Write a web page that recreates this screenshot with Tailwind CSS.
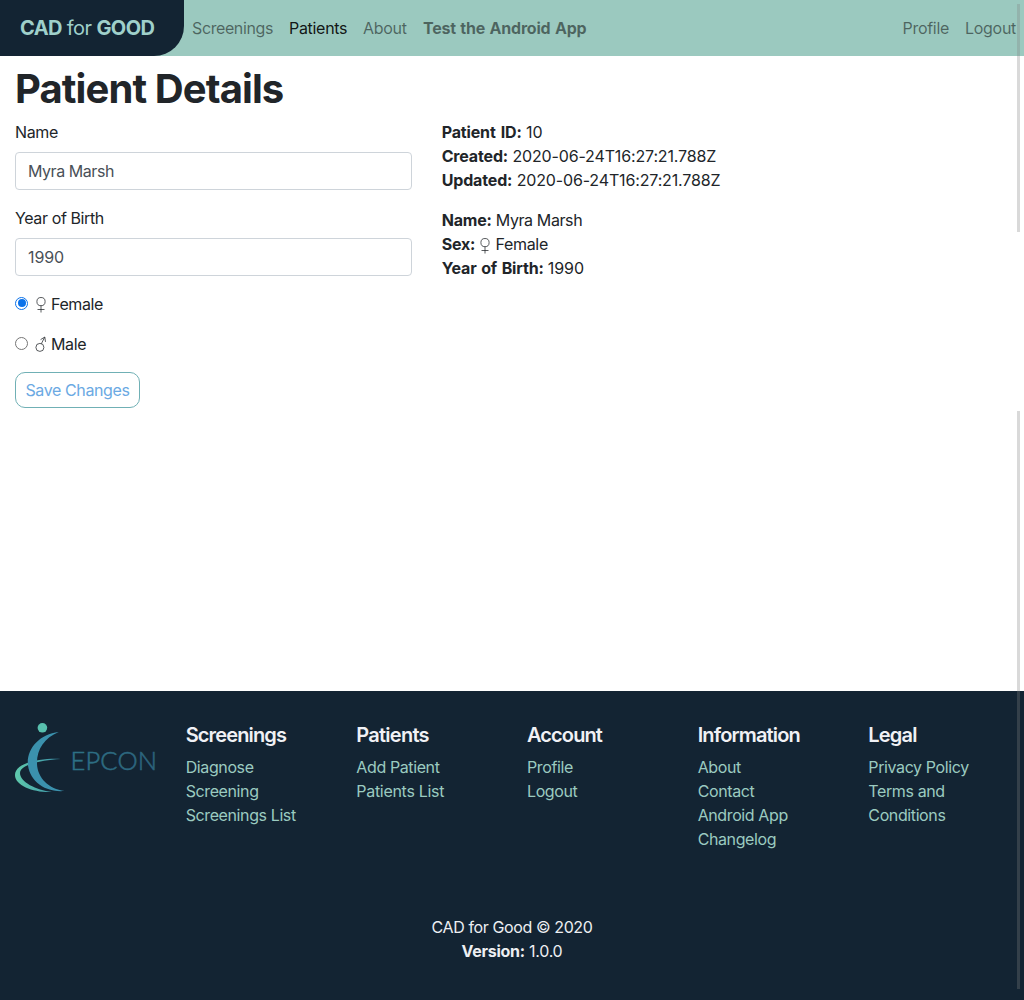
<!DOCTYPE html>
<html lang="en">
<head>
<meta charset="utf-8">
<title>CAD for GOOD</title>
<script src="https://cdn.jsdelivr.net/npm/@tailwindcss/browser@4"></script>
</head>
<body class="relative flex h-[1000px] flex-col overflow-hidden bg-white font-[Inter,sans-serif] text-base leading-6 tracking-[-0.39px] text-[#212529]">
<svg class="hidden">
  <symbol id="female" viewBox="0 0 12 18"><g fill="none" stroke="currentColor" stroke-width=".75"><circle cx="6" cy="5.6" r="4.1"/><path d="M6 9.7v6.8M2.5 13.5h7"/></g></symbol>
  <symbol id="male" viewBox="0 0 12 18"><g fill="none" stroke="currentColor" stroke-width=".75"><circle cx="4.9" cy="12.4" r="4"/><path d="M6.4 8.7 9.6 2.3M5.6 4.6 9.8 2l.7 4.9"/></g></symbol>
</svg>
<nav class="flex h-14 shrink-0 items-center bg-[#9bc9bf] text-black/50">
  <a class="flex h-14 w-[184px] items-center whitespace-pre rounded-br-[30px] bg-[#132433] pl-5 text-xl tracking-[-0.6px] text-[#9fd0ca]"><b>CAD</b> for <b>GOOD</b></a>
  <a class="w-[97px] pl-2">Screenings</a>
  <a class="w-[74px] pl-2 tracking-[-0.3px] text-black/90">Patients</a>
  <a class="w-[60px] pl-2 tracking-[-0.3px]">About</a>
  <a class="pl-2 font-bold tracking-[-0.2px] [word-spacing:0.8px]">Test the Android App</a>
  <a class="ml-auto pr-4 tracking-[-0.3px]">Profile</a>
  <a class="pr-2 tracking-[-0.3px]">Logout</a>
</nav>
<main class="flex-1 pt-2">
  <h1 class="mb-2 px-[15px] pt-px text-[40px] font-bold leading-[47px] tracking-[-0.9px]">Patient Details</h1>
  <div class="flex">
    <form class="w-5/12 px-[15px]">
      <label class="mb-2 block">Name</label>
      <input class="mb-4 block h-[38px] w-full rounded border border-[#ced4da] px-3 tracking-[-0.45px] text-[#495057]" value="Myra Marsh">
      <label class="mb-2 block">Year of Birth</label>
      <input class="mb-4 block h-[38px] w-full rounded border border-[#ced4da] px-3 tracking-[-0.1px] text-[#495057]" value="1990">
      <label class="mb-4 flex h-6 items-center"><span class="mr-[7px] mb-[2px] flex size-[13px] items-center justify-center rounded-full border border-[#0b72ea]"><span class="size-2 rounded-full bg-[#0b72ea]"></span></span><svg class="mr-1 mt-0.5 h-[18px] w-3"><use href="#female"/></svg>Female</label>
      <label class="mb-4 flex h-6 items-center"><span class="mr-[7px] mb-[2px] size-[13px] rounded-full border border-[#767676]"></span><svg class="mr-1 h-[18px] w-3"><use href="#male"/></svg>Male</label>
      <button type="button" class="h-9 w-[125px] rounded-[10px] border border-[#70b0b5] text-[#6ba9e3]">Save Changes</button>
    </form>
    <section class="px-[15px]">
      <p class="mb-4 tracking-[-0.15px]"><b class="[word-spacing:1.5px]">Patient ID:</b> 10<br><b>Created:</b> 2020-06-24T16:27:21.788Z<br><b>Updated:</b> 2020-06-24T16:27:21.788Z</p>
      <p><b class="tracking-[-0.2px]">Name:</b> Myra Marsh<br><b class="tracking-[-0.2px]">Sex:</b> <svg class="inline h-[18px] w-3 align-[-5px]"><use href="#female"/></svg> <span class="tracking-[-0.3px]">Female</span><br><b class="tracking-[-0.15px] [word-spacing:1px]">Year of Birth:</b> <span class="tracking-[-0.1px]">1990</span></p>
    </section>
  </div>
</main>
<footer class="h-[309px] shrink-0 bg-[#132433] pt-8 text-[#9bcbc0]">
  <div class="grid h-[192px] grid-cols-6">
    <div class="pl-[15px]">
      <svg class="h-[72px] w-[142px]" viewBox="15 723 142 72">
        <defs>
          <linearGradient id="ring"><stop stop-color="#5fc9ac"/><stop offset="1" stop-color="#398fa9"/></linearGradient>
          <linearGradient id="word"><stop stop-color="#2d7185"/><stop offset="1" stop-color="#2c637d"/></linearGradient>
        </defs>
        <circle cx="42.4" cy="727.8" r="4.8" fill="#58c0ae"/>
        <path fill="url(#ring)" d="M60.5 759C43 758 15 762 15 775C15 786 35 793 52 792C36 790 20 782 20 773C20 765 39 760.5 60.5 759Z"/>
        <path fill="#3b91ad" d="M58.8 732C40 734 27.5 748 27.8 763C28.5 779 43 792.8 64.5 791C49 789 37.5 778 37 764C36.5 750 44 738 58.8 732Z"/>
        <text x="70.5" y="769.8" textLength="86.5" lengthAdjust="spacing" fill="url(#word)" stroke="url(#word)" stroke-width=".5" font-family="Lato" font-size="25.5" font-weight="300" letter-spacing="0">EPCON</text>
      </svg>
    </div>
    <div class="pl-[15px]"><h5 class="mb-2 text-xl font-semibold leading-6 tracking-[-0.85px] text-[#f0f1f5]">Screenings</h5>Diagnose<br>Screening<br>Screenings List</div>
    <div class="pl-[15px]"><h5 class="mb-2 text-xl font-semibold leading-6 tracking-[-0.75px] text-[#f0f1f5]">Patients</h5>Add Patient<br><span class="tracking-[-0.3px]">Patients List</span></div>
    <div class="pl-[15px]"><h5 class="mb-2 text-xl font-semibold leading-6 tracking-[-0.9px] text-[#f0f1f5]">Account</h5>Profile<br>Logout</div>
    <div class="pl-[15px]"><h5 class="mb-2 text-xl font-semibold leading-6 tracking-[-0.85px] text-[#f0f1f5]">Information</h5>About<br>Contact<br>Android App<br>Changelog</div>
    <div class="pl-[15px]"><h5 class="mb-2 text-xl font-semibold leading-6 tracking-[-0.8px] text-[#f0f1f5]">Legal</h5>Privacy Policy<br>Terms and<br>Conditions</div>
  </div>
  <p class="text-center text-[#edeff2]">CAD for Good © 2020<br><span class="tracking-[-0.27px]"><b>Version:</b> 1.0.0</span></p>
</footer>
<div class="absolute left-[1017px] top-1 h-[228px] w-[3px] bg-[#808080]/30"></div>
<div class="absolute left-[1017px] top-[411px] h-[578px] w-[3px] bg-[#808080]/30"></div>
</body>
</html>
